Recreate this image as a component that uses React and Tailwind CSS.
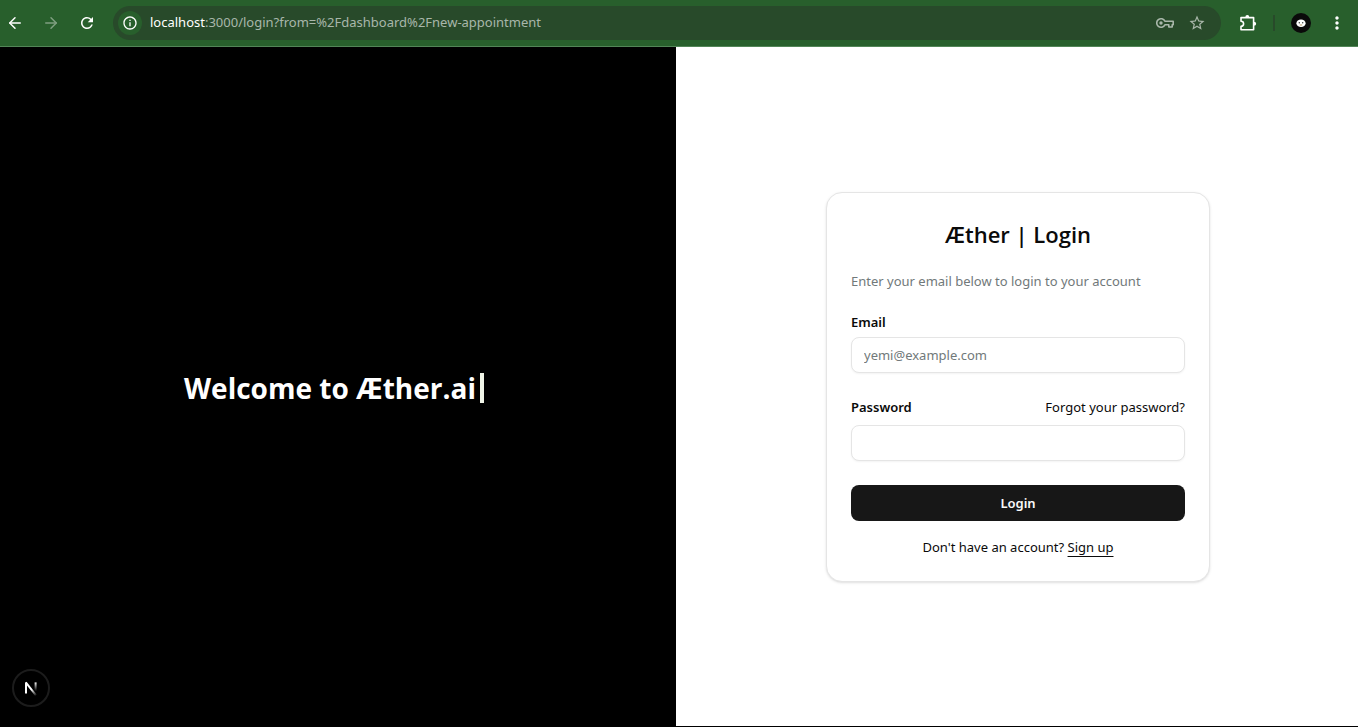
import { useState } from "react";
import { ArrowLeft, ArrowRight } from "lucide-react";
import { MdInfoOutline, MdMoreVert, MdRefresh, MdStarBorder } from "react-icons/md";

const KeyIcon = () => (
    <svg className="h-[18px] w-[18px]" viewBox="0 0 18 18" fill="none" stroke="currentColor">
        <path
            d="M8.9 7.2H17.2V10.8H16.2V13H12.8V10.8H8.9A4.3 4.3 0 1 1 8.9 7.2Z"
            strokeWidth="1.6"
            strokeLinejoin="round"
        />
        <circle cx="5" cy="9" r="1.7" fill="currentColor" stroke="none" />
    </svg>
);

const PuzzleIcon = () => (
    <svg className="h-[18px] w-[18px]" viewBox="0 0 18 18">
        <path
            d="M2 3.6H14.6V15.8H2V12.4A2.6 2.6 0 0 0 2 7.2Z"
            fill="none"
            stroke="currentColor"
            strokeWidth="1.6"
            strokeLinejoin="round"
        />
        <path d="M6.3 3.4a2 2.4 0 0 1 4 0zM14.8 7.7a2.4 2 0 0 1 0 4z" fill="currentColor" />
    </svg>
);

const BrowserBar = () => {
    const [url, setUrl] = useState("/login?from=%2Fdashboard%2Fnew-appointment");

    return (
        <header className="flex h-[47px] shrink-0 items-center border-b border-[#528557] bg-[#285f2c] pr-[11px] pl-1.5 text-white">
            <div className="flex items-center gap-[18px]">
                <button type="button" aria-label="Back">
                    <ArrowLeft className="h-[18px] w-[18px]" />
                </button>
                <button type="button" aria-label="Forward" className="text-[#7f9f80]">
                    <ArrowRight className="h-[18px] w-[18px]" />
                </button>
                <button type="button" aria-label="Reload">
                    <MdRefresh className="h-[18px] w-[18px]" />
                </button>
            </div>

            <div className="ml-[17px] flex h-[34px] flex-1 items-center rounded-full bg-[#284a2a] pr-[15px] pl-[5px]">
                <button
                    type="button"
                    aria-label="Site information"
                    className="flex h-6 w-6 items-center justify-center rounded-full bg-[#285f2c]"
                >
                    <MdInfoOutline className="h-4 w-4" />
                </button>
                <label className="ml-2 flex flex-1 items-center text-[13px]">
                    <span>localhost</span>
                    <span className="text-[#a9b7aa]">:3000</span>
                    <input
                        aria-label="Address"
                        className="flex-1 bg-transparent text-[#a9b7aa] outline-none"
                        value={url}
                        onChange={(e) => setUrl(e.target.value)}
                    />
                </label>
                <div className="flex items-center gap-3.5 text-[#a9b7aa]">
                    <button type="button" aria-label="Passwords">
                        <KeyIcon />
                    </button>
                    <button type="button" aria-label="Bookmark">
                        <MdStarBorder className="h-[18px] w-[18px]" />
                    </button>
                </div>
            </div>

            <div className="ml-[18px] flex items-center gap-4">
                <button type="button" aria-label="Extensions">
                    <PuzzleIcon />
                </button>
                <span className="h-4 w-0.5 bg-[#284a2a]" />
                <button type="button" aria-label="Profile">
                    <svg className="h-5 w-5" viewBox="0 0 20 20">
                        <circle cx="10" cy="10" r="10" fill="#0a0a0a" />
                        <ellipse cx="10" cy="10.3" rx="4.6" ry="3.8" fill="#fff" />
                        <circle cx="8.3" cy="9.8" r="0.7" fill="#333" />
                        <circle cx="11.7" cy="9.8" r="0.7" fill="#333" />
                        <path d="M8.8 12h2.4" stroke="#a67c3d" strokeWidth="0.8" />
                    </svg>
                </button>
                <button type="button" aria-label="Menu">
                    <MdMoreVert className="h-5 w-5" />
                </button>
            </div>
        </header>
    );
};

const DevBadge = () => (
    <button
        type="button"
        aria-label="Open dev tools"
        className="absolute bottom-[19px] left-3 flex h-[38px] w-[38px] items-center justify-center rounded-full border-2 border-[#1c1c1c] bg-black"
    >
        <svg className="h-4 w-4" viewBox="0 0 16 16" fill="none">
            <defs>
                <linearGradient id="diag" x1="9" y1="9" x2="13" y2="14" gradientUnits="userSpaceOnUse">
                    <stop stopColor="#fff" />
                    <stop offset="1" stopColor="#fff" stopOpacity="0.2" />
                </linearGradient>
                <linearGradient id="stem" x1="12" y1="2" x2="12" y2="10" gradientUnits="userSpaceOnUse">
                    <stop stopColor="#fff" />
                    <stop offset="1" stopColor="#fff" stopOpacity="0.1" />
                </linearGradient>
            </defs>
            <path d="M3 13.6V2.4" stroke="#fff" strokeWidth="2" />
            <path d="M2.8 2.4l10 12.8" stroke="url(#diag)" strokeWidth="2" />
            <path d="M12.6 2.4v8.4" stroke="url(#stem)" strokeWidth="2" />
        </svg>
    </button>
);

const inputClass =
    "h-9 w-full rounded-lg border border-neutral-200 bg-white px-3 text-[13px] shadow-xs outline-none placeholder:text-[#71797a] focus:border-neutral-400";

const LoginForm = () => {
    const [email, setEmail] = useState("");
    const [password, setPassword] = useState("");

    return (
        <div className="w-full max-w-sm rounded-2xl border border-neutral-200 bg-white p-6 text-[13px] leading-5 text-neutral-950 shadow-sm">
            <h1 className="text-center font-['Open_Sans',sans-serif] text-[22px] leading-[34px] font-semibold">
                Æther | Login
            </h1>
            <p className="mt-5 text-[#71797a]">
                Enter your email below to login to your account
            </p>

            <form className="mt-6 flex flex-col gap-6" onSubmit={(e) => e.preventDefault()}>
                <div className="grid gap-2">
                    <label htmlFor="email" className="leading-[14px] font-semibold">
                        Email
                    </label>
                    <input
                        id="email"
                        type="email"
                        placeholder="yemi@example.com"
                        className={inputClass}
                        value={email}
                        onChange={(e) => setEmail(e.target.value)}
                    />
                </div>
                <div className="grid gap-2">
                    <div className="flex items-center justify-between">
                        <label htmlFor="password" className="font-semibold">
                            Password
                        </label>
                        <a href="#forgot" className="hover:underline">
                            Forgot your password?
                        </a>
                    </div>
                    <input
                        id="password"
                        type="password"
                        className={inputClass}
                        value={password}
                        onChange={(e) => setPassword(e.target.value)}
                    />
                </div>
                <button
                    type="submit"
                    className="h-9 w-full rounded-lg bg-neutral-900 font-semibold text-neutral-50"
                >
                    Login
                </button>
            </form>

            <p className="mt-4 text-center">
                Don't have an account?{" "}
                <a href="#signup" className="underline underline-offset-4">
                    Sign up
                </a>
            </p>
        </div>
    );
};

const App = () => {
    return (
        <div className="flex min-h-screen flex-col bg-black font-['Noto_Sans',sans-serif]">
            <BrowserBar />
            <main className="mb-px grid flex-1 grid-cols-[676fr_682fr]">
                <section className="relative flex items-center justify-center bg-black pt-0.5 pr-2">
                    <h2 className="flex items-center font-['Open_Sans',sans-serif] text-[28px] leading-9 font-bold text-white">
                        Welcome to Æther.ai
                        <span className="ml-1 h-[30px] w-1 bg-[#f0f5e8]" />
                    </h2>
                    <DevBadge />
                </section>
                <section className="flex items-center justify-center bg-white pl-0.5">
                    <LoginForm />
                </section>
            </main>
        </div>
    );
};

export default App;
